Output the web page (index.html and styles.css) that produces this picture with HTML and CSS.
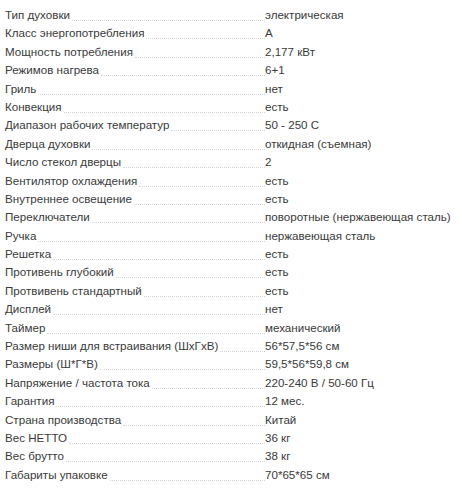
FILE: index.html
```
<!DOCTYPE html>
<html lang="ru">
<head>
<meta charset="utf-8">
<link rel="stylesheet" href="styles.css">
</head>
<body>
<div class="specs">
  <div class="row"><div class="name"><span>Тип духовки</span><i class="dots"></i></div><div class="val">электрическая</div></div>
  <div class="row"><div class="name"><span>Класс энергопотребления</span><i class="dots"></i></div><div class="val">A</div></div>
  <div class="row"><div class="name"><span>Мощность потребления</span><i class="dots"></i></div><div class="val">2,177 кВт</div></div>
  <div class="row"><div class="name"><span>Режимов нагрева</span><i class="dots"></i></div><div class="val">6+1</div></div>
  <div class="row"><div class="name"><span>Гриль</span><i class="dots"></i></div><div class="val">нет</div></div>
  <div class="row"><div class="name"><span>Конвекция</span><i class="dots"></i></div><div class="val">есть</div></div>
  <div class="row"><div class="name"><span>Диапазон рабочих температур</span><i class="dots"></i></div><div class="val">50 - 250 С</div></div>
  <div class="row"><div class="name"><span>Дверца духовки</span><i class="dots"></i></div><div class="val">откидная (съемная)</div></div>
  <div class="row"><div class="name"><span>Число стекол дверцы</span><i class="dots"></i></div><div class="val">2</div></div>
  <div class="row"><div class="name"><span>Вентилятор охлаждения</span><i class="dots"></i></div><div class="val">есть</div></div>
  <div class="row"><div class="name"><span>Внутреннее освещение</span><i class="dots"></i></div><div class="val">есть</div></div>
  <div class="row"><div class="name"><span>Переключатели</span><i class="dots"></i></div><div class="val">поворотные (нержавеющая сталь)</div></div>
  <div class="row"><div class="name"><span>Ручка</span><i class="dots"></i></div><div class="val">нержавеющая сталь</div></div>
  <div class="row"><div class="name"><span>Решетка</span><i class="dots"></i></div><div class="val">есть</div></div>
  <div class="row"><div class="name"><span>Противень глубокий</span><i class="dots"></i></div><div class="val">есть</div></div>
  <div class="row"><div class="name"><span>Протвивень стандартный</span><i class="dots"></i></div><div class="val">есть</div></div>
  <div class="row"><div class="name"><span>Дисплей</span><i class="dots"></i></div><div class="val">нет</div></div>
  <div class="row"><div class="name"><span>Таймер</span><i class="dots"></i></div><div class="val">механический</div></div>
  <div class="row"><div class="name"><span>Размер ниши для встраивания (ШхГхВ)</span><i class="dots"></i></div><div class="val">56*57,5*56 см</div></div>
  <div class="row"><div class="name"><span>Размеры (Ш*Г*В)</span><i class="dots"></i></div><div class="val">59,5*56*59,8 см</div></div>
  <div class="row"><div class="name"><span>Напряжение / частота тока</span><i class="dots"></i></div><div class="val">220-240 В / 50-60 Гц</div></div>
  <div class="row"><div class="name"><span>Гарантия</span><i class="dots"></i></div><div class="val">12 мес.</div></div>
  <div class="row"><div class="name"><span>Страна производства</span><i class="dots"></i></div><div class="val">Китай</div></div>
  <div class="row"><div class="name"><span>Вес НЕТТО</span><i class="dots"></i></div><div class="val">36 кг</div></div>
  <div class="row"><div class="name"><span>Вес брутто</span><i class="dots"></i></div><div class="val">38 кг</div></div>
  <div class="row"><div class="name"><span>Габариты упаковке</span><i class="dots"></i></div><div class="val">70*65*65 см</div></div>
</div>
</body>
</html>
```
FILE: styles.css
```
html, body {
  margin: 0;
  padding: 0;
  background: #fff;
}
body {
  font-family: "Liberation Sans", Arial, sans-serif;
  font-size: 11.6px;
  color: #3a3a3a;
}
.specs {
  padding: 6px 0 0 5px;
}
.row {
  display: flex;
  height: 18.4px;
  align-items: stretch;
}
.name {
  width: 260px;
  display: flex;
  align-items: flex-start;
  line-height: 18px;
}
.name span {
  white-space: nowrap;
}
.dots {
  flex: 1;
  height: 14px;
  margin-left: 2px;
  border-bottom: 1px dotted #d6d6d6;
}
.val {
  line-height: 18px;
  white-space: nowrap;
}
```
